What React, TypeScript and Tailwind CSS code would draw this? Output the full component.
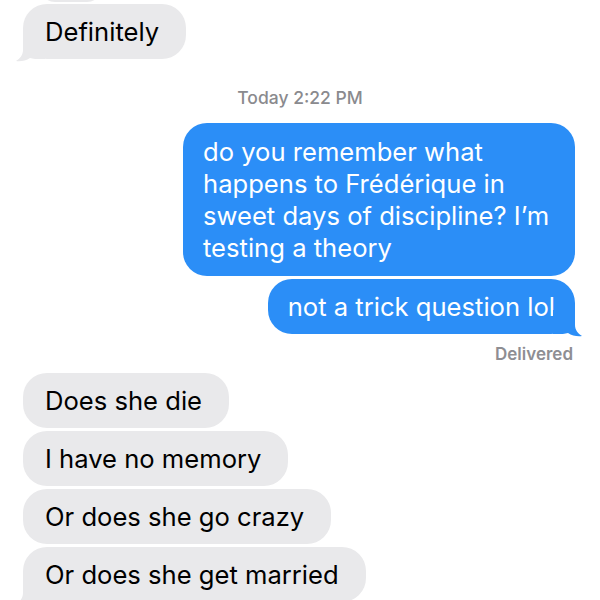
import type { ReactNode } from "react";

const GRAY = "#e9e9eb";
const BLUE = "#2b8ef7";

function Tail({ side, color }: { side: "left" | "right"; color: string }) {
  return (
    <svg
      width="32"
      height="28"
      viewBox="-8 -24 32 28"
      className={
        side === "left"
          ? "absolute left-[-8px] bottom-[-4px]"
          : "absolute right-[-8px] bottom-[-4px] -scale-x-100"
      }
    >
      <path
        d="M0 -24 L0 -9 C0 -4 -3 -0.5 -7 2 C-2 2.6 3 1.6 7 -1 C10 0 13 0 22 0 L22 -24 Z"
        fill={color}
      />
    </svg>
  );
}

function Received({ children, tail }: { children: ReactNode; tail?: boolean }) {
  return (
    <div className="relative ml-[23px] shrink-0 self-start rounded-[24px] bg-[#e9e9eb] pl-[22px] pr-[27px] py-[11.5px] text-[25.6px] leading-[32px] text-black whitespace-nowrap">
      {children}
      {tail ? <Tail side="left" color={GRAY} /> : null}
    </div>
  );
}

function Sent({ children, tail }: { children: ReactNode; tail?: boolean }) {
  return (
    <div className="relative mr-[25px] shrink-0 self-end rounded-[24px] bg-[#2b8ef7] px-[20px] py-[11.5px] text-[25.6px] leading-[32px] text-white whitespace-nowrap">
      {children}
      {tail ? <Tail side="right" color={BLUE} /> : null}
    </div>
  );
}

export default function App() {
  return (
    <div className="h-[600px] w-[600px] overflow-hidden bg-white font-['Inter','Liberation_Sans',sans-serif]">
      <div className="flex flex-col">
        <div className="ml-[40px] -mt-[28px] h-[30px] w-[62px] shrink-0 self-start rounded-full bg-[#e9e9eb]" />
        <div className="mt-[2px] flex flex-col">
          <Received tail>Definitely</Received>
        </div>

        <div className="mt-[28px] text-center text-[17.5px] leading-[22px] font-medium text-[#8a8a8e]">
          Today 2:22 PM
        </div>

        <div className="mt-[14px] flex flex-col gap-[3px]">
          <Sent>
            <div className="w-[352px] py-[1px]">
              do you remember what
              <br />
              happens to Frédérique in
              <br />
              sweet days of discipline? I’m
              <br />
              testing a theory
            </div>
          </Sent>
          <Sent tail>not a trick question lol</Sent>
        </div>

        <div className="mt-[10px] mr-[27px] self-end text-[17px] leading-[20px] font-semibold text-[#8e8e93]">
          Delivered
        </div>

        <div className="mt-[9px] flex flex-col gap-[3px]">
          <Received>Does she die</Received>
          <Received>I have no memory</Received>
          <Received>Or does she go crazy</Received>
          <Received tail>Or does she get married</Received>
        </div>
      </div>
    </div>
  );
}
